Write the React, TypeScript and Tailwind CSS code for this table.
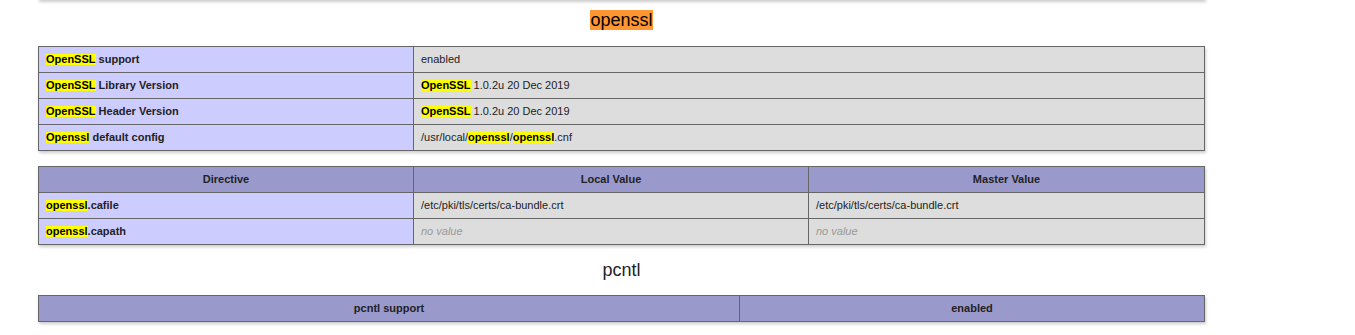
import React from "react";

const H = ({ children }: { children: React.ReactNode }) => (
  <span className="inline-block bg-[#ffff00] leading-[11px] font-bold text-black">{children}</span>
);

const tdE = "bg-[#ccccff] border border-[#666666] font-bold px-[7px] py-0 text-left";
const tdV = "bg-[#dddddd] border border-[#666666] px-[7px] py-0 text-left";
const th = "bg-[#9999cc] border border-[#666666] font-bold px-[7px] py-0 text-center";

export default function App() {
  return (
    <div
      className="bg-white min-h-[335px] w-[1355px] text-[#222222] overflow-hidden"
      style={{ fontFamily: '"Liberation Sans", Arial, sans-serif' }}
    >
      <div className="ml-[38px] w-[1167px] flex flex-col">
        <div className="h-[20px] -mt-[20px] bg-[#dddddd] shadow-[1px_2px_3px_#cccccc]" />
        <h2 className="mt-[10px] text-center text-[18px] leading-[21px] text-black">
          <span className="bg-[#ff9632]">openssl</span>
        </h2>
        <table className="mt-[15px] w-[1167px] table-fixed border-collapse text-[11px] shadow-[1px_2px_3px_#cccccc]">
          <colgroup>
            <col className="w-[375px]" />
            <col />
          </colgroup>
          <tbody>
            <tr className="h-[26px]">
              <td className={tdE}><H>OpenSSL</H> support</td>
              <td className={tdV}>enabled</td>
            </tr>
            <tr className="h-[26px]">
              <td className={tdE}><H>OpenSSL</H> Library Version</td>
              <td className={tdV}><H>OpenSSL</H> 1.0.2u  20 Dec 2019</td>
            </tr>
            <tr className="h-[26px]">
              <td className={tdE}><H>OpenSSL</H> Header Version</td>
              <td className={tdV}><H>OpenSSL</H> 1.0.2u  20 Dec 2019</td>
            </tr>
            <tr className="h-[26px]">
              <td className={tdE}><H>Openssl</H> default config</td>
              <td className={tdV}>/usr/local/<H>openssl</H>/<H>openssl</H>.cnf</td>
            </tr>
          </tbody>
        </table>
        <table className="mt-[15px] w-[1167px] table-fixed border-collapse text-[11px] shadow-[1px_2px_3px_#cccccc]">
          <colgroup>
            <col className="w-[375px]" />
            <col className="w-[395px]" />
            <col />
          </colgroup>
          <tbody>
            <tr className="h-[26px]">
              <th className={th}>Directive</th>
              <th className={th}>Local Value</th>
              <th className={th}>Master Value</th>
            </tr>
            <tr className="h-[26px]">
              <td className={tdE}><H>openssl</H>.cafile</td>
              <td className={tdV}>/etc/pki/tls/certs/ca-bundle.crt</td>
              <td className={tdV}>/etc/pki/tls/certs/ca-bundle.crt</td>
            </tr>
            <tr className="h-[26px]">
              <td className={tdE}><H>openssl</H>.capath</td>
              <td className={tdV}><i className="text-[#999999]">no value</i></td>
              <td className={tdV}><i className="text-[#999999]">no value</i></td>
            </tr>
          </tbody>
        </table>
        <h2 className="mt-[15px] text-center text-[18px] leading-[21px] text-[#222222]">pcntl</h2>
        <table className="mt-[14px] w-[1167px] table-fixed border-collapse text-[11px] shadow-[1px_2px_3px_#cccccc]">
          <colgroup>
            <col className="w-[701px]" />
            <col />
          </colgroup>
          <tbody>
            <tr className="h-[26px]">
              <th className={th}>pcntl support</th>
              <th className={th}>enabled</th>
            </tr>
          </tbody>
        </table>
      </div>
    </div>
  );
}
